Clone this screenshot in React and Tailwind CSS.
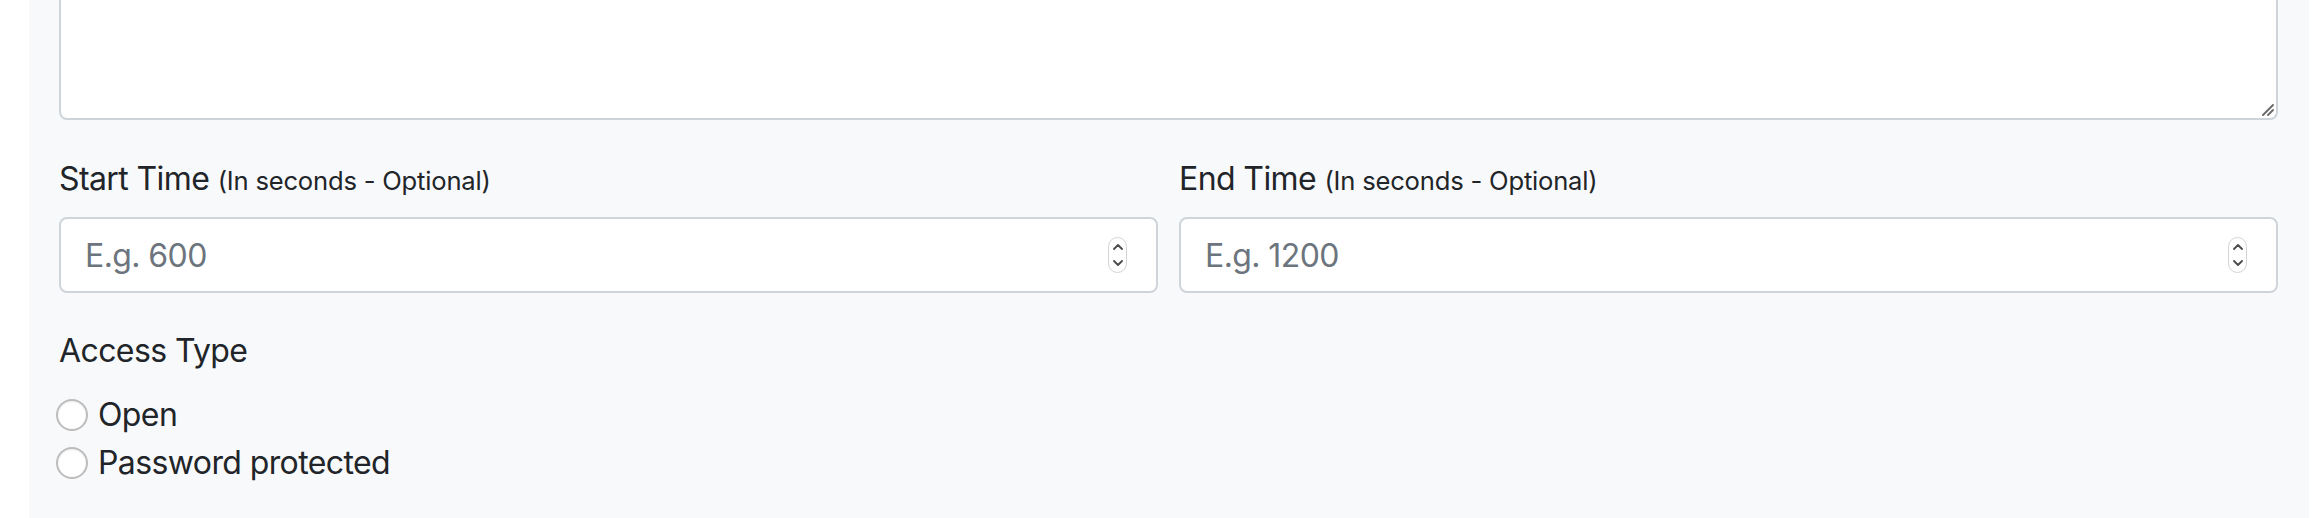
import { useState } from 'react'

function Spinner() {
  return (
    <span className="pointer-events-none absolute right-[31px] top-1/2 flex h-[36px] w-[19px] -translate-y-1/2 flex-col items-center justify-between rounded-full border border-[#d4d4d4] bg-white py-[6px]">
      <svg width="10" height="6" viewBox="0 0 10 6" fill="none">
        <path d="M1 5 L5 1 L9 5" stroke="#4a4a4a" strokeWidth="1.8" strokeLinecap="round" strokeLinejoin="round" />
      </svg>
      <svg width="10" height="6" viewBox="0 0 10 6" fill="none">
        <path d="M1 1 L5 5 L9 1" stroke="#4a4a4a" strokeWidth="1.8" strokeLinecap="round" strokeLinejoin="round" />
      </svg>
    </span>
  )
}

function TimeField({ label, placeholder }) {
  return (
    <div>
      <label className="mb-[12px] block pt-[3px] text-[32px] leading-[48px] tracking-[-0.6px] text-[#212529]">
        {label} <span className="text-[25.6px] tracking-[-0.2px]">(In seconds - Optional)</span>
      </label>
      <div className="relative">
        <input
          type="text"
          inputMode="numeric"
          placeholder={placeholder}
          className="block h-[76px] w-full rounded-[8px] border-2 border-[#ced4da] bg-white px-6 text-[32px] tracking-[-0.6px] text-[#495057] outline-none placeholder:text-[#6c757d]"
        />
        <Spinner />
      </div>
    </div>
  )
}

export default function App() {
  const [access, setAccess] = useState('')

  return (
    <div className="min-h-[518px] bg-white pl-[29px] pr-[11px] font-['Inter','Liberation_Sans',sans-serif]">
      <div className="min-h-[518px] bg-[#f8f9fa] pl-[30px] pr-[31px]">
        <div className="relative mb-8 h-[120px]">
          <textarea className="block h-full w-full resize-none rounded-b-[8px] border-2 border-t-0 border-[#ced4da] bg-white px-6 text-[32px] outline-none" />
          <svg className="pointer-events-none absolute bottom-[3px] right-[3px]" width="14" height="14" viewBox="0 0 14 14">
            <path d="M2 12 L12 2" stroke="#6b6b6b" strokeWidth="2" strokeLinecap="round" />
            <path d="M7 12 L12 7" stroke="#6b6b6b" strokeWidth="2" strokeLinecap="round" />
          </svg>
        </div>

        <div className="mb-8 grid grid-cols-2 gap-x-[21px]">
          <TimeField label="Start Time" placeholder="E.g. 600" />
          <TimeField label="End Time" placeholder="E.g. 1200" />
        </div>

        <div className="pt-[2px]">
          <div className="mb-[16px] text-[32px] leading-[48px] tracking-[-0.6px] text-[#212529]">Access Type</div>
          {[
            ['open', 'Open'],
            ['password', 'Password protected'],
          ].map(([value, text]) => (
            <label key={value} className="flex h-[48px] items-center text-[32px] tracking-[-0.6px] text-[#212529]">
              <input
                type="radio"
                name="access"
                checked={access === value}
                onChange={() => setAccess(value)}
                className="-ml-[3px] mr-[10px] h-[32px] w-[32px] appearance-none rounded-full border-2 border-[#bdbdbd] bg-white shadow-[inset_0_1px_2px_rgba(0,0,0,0.08)] checked:border-[10px] checked:border-[#0d6efd]"
              />
              {text}
            </label>
          ))}
        </div>
      </div>
    </div>
  )
}
